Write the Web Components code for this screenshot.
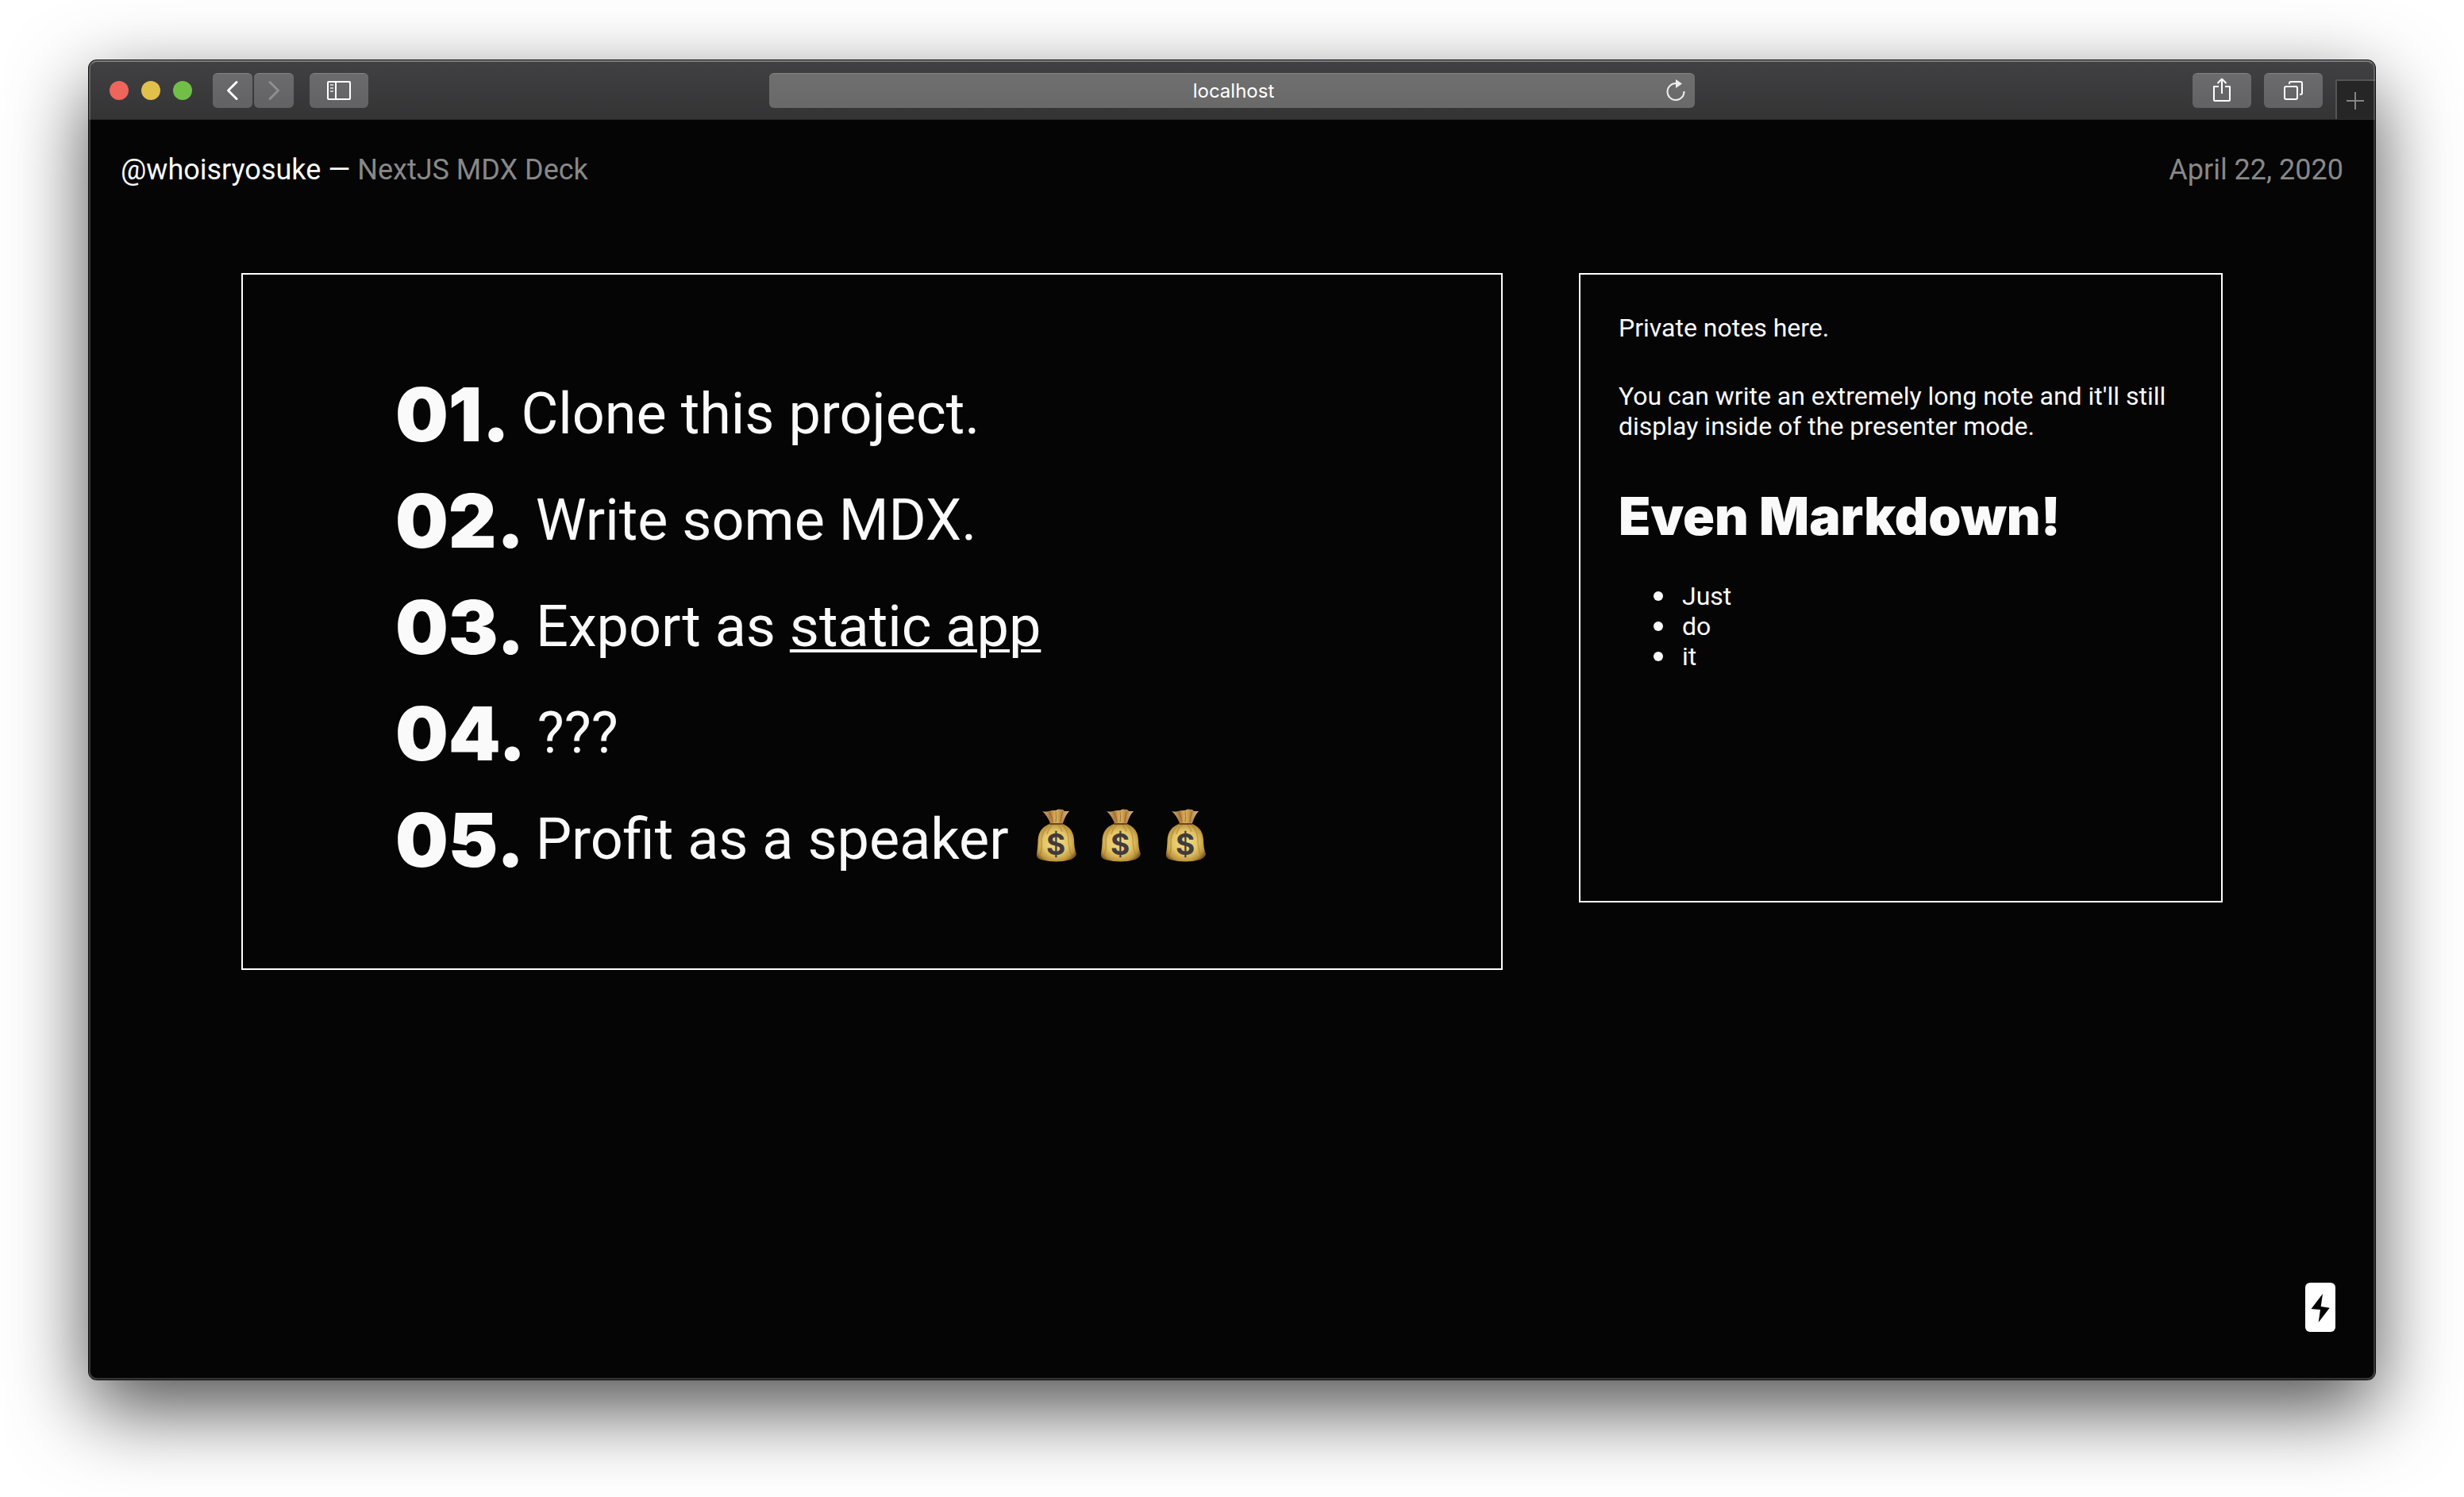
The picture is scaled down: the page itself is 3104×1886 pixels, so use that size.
<!DOCTYPE html>
<html lang="en">
<head>
<meta charset="utf-8">
<title>NextJS MDX Deck</title>
<style>
html, body { height: 100%; }
body { margin: 0; background: #fff; font-family: Roboto, "Liberation Sans", sans-serif; color: #fafafa; }
</style>
</head>
<body>
<deck-window>
  <browser-toolbar slot="toolbar"></browser-toolbar>
  <deck-header slot="page">
    <span slot="author">@whoisryosuke —</span>
    <span slot="title">NextJS MDX Deck</span>
    <time slot="date" datetime="2020-04-22">April 22, 2020</time>
  </deck-header>
  <presenter-view slot="page">
    <deck-slide slot="slide">
      <deck-step role="listitem" number="01.">Clone this project.</deck-step>
      <deck-step role="listitem" number="02.">Write some MDX.</deck-step>
      <deck-step role="listitem" number="03.">Export as <a href="#static" style="color:inherit;text-decoration-thickness:4px;text-underline-offset:4px">static app</a></deck-step>
      <deck-step role="listitem" number="04.">???</deck-step>
      <deck-step role="listitem" number="05.">Profit as a speaker <money-bag></money-bag> <money-bag></money-bag> <money-bag></money-bag></deck-step>
    </deck-slide>
    <speaker-notes slot="notes"></speaker-notes>
  </presenter-view>
  <amp-badge slot="badge"></amp-badge>
</deck-window>

<script>
const define = (name, html) => {
  const template = document.createElement('template');
  template.innerHTML = html;
  customElements.define(name, class extends HTMLElement {
    constructor() {
      super();
      this.attachShadow({ mode: 'open' }).append(template.content.cloneNode(true));
    }
    connectedCallback() {
      const n = this.shadowRoot.querySelector('[data-number]');
      if (n) n.textContent = this.getAttribute('number');
    }
  });
};

define('deck-window', `
<style>
:host { display: flex; box-sizing: border-box; height: 100%; padding: 76px 112px 148px; }
.window { position: relative; flex: 1; display: flex; flex-direction: column; overflow: hidden; background: #050505; border-radius: 10px; }
.shadow { flex: 1; display: flex; border-radius: 10px; box-shadow: 0 0 0 1px #0a0c0a, 0 36px 100px rgba(0,0,0,.7); }
.rim { position: absolute; inset: 0; border: 2px solid rgba(255,255,255,.2); border-top-color: rgba(255,255,255,.32); border-radius: 10px; pointer-events: none; }
.badge { position: absolute; right: 50px; bottom: 60px; }
</style>
<div class="shadow"><div class="window">
  <slot name="toolbar"></slot>
  <main><slot name="page"></slot></main>
  <div class="badge"><slot name="badge"></slot></div>
  <div class="rim"></div>
</div></div>`);

define('browser-toolbar', `
<style>
:host { display: grid; grid-template-columns: 1fr 1166px 1fr; box-sizing: border-box; height: 75px; background: linear-gradient(#414143, #343435); border-bottom: 1px solid #29292a; }
div { display: flex; }
.left { padding: 16px 0 0 26px; }
.light { width: 24px; height: 24px; margin: 10px 16px 0 0; border-radius: 50%; }
.light:nth-child(3) { margin-right: 26px; }
button { box-sizing: border-box; height: 44px; width: 74px; margin: 0; padding: 0; border: 0; border-top: 1px solid #838385; border-radius: 6px; background: linear-gradient(#6b6b6d, #626264); color: #fff; display: block; }
button svg { display: block; margin: -1px auto 0; }
.nav { width: 50px; margin-right: 2px; }
.nav.next { margin-right: 20px; color: #8f8f91; }
.address { position: relative; margin-top: 16px; height: 44px; }
input { box-sizing: border-box; width: 100%; height: 44px; margin: 0; padding: 0 0 0 4px; border: 0; border-top: 1px solid #868687; border-radius: 6px; background: linear-gradient(#6f6f70, #696969); color: #fff; text-align: center; font: 24px/44px Inter, "Liberation Sans", sans-serif; }
.reload { position: absolute; right: 6px; top: 0; width: 36px; border: 0; background: none; color: #eee; }
.right { justify-content: flex-end; gap: 16px; }
.right button { margin-top: 16px; }
.right .tab { width: 50px; height: 50px; margin-top: 24px; border: 2px solid #555557; border-right: 0; border-bottom: 0; border-radius: 0; background: #262626; color: #858585; }
</style>
<div class="left">
  <span class="light" style="background:#ee655b"></span><span class="light" style="background:#e1c04c"></span><span class="light" style="background:#71bf47"></span>
  <button class="nav" aria-label="Back"><svg width="50" height="44" fill="none" stroke="currentColor" stroke-width="3" stroke-linecap="round" stroke-linejoin="round"><path d="M30 11.500 19.500 22 30 32.500"/></svg></button>
  <button class="nav next" aria-label="Forward"><svg width="50" height="44" fill="none" stroke="currentColor" stroke-width="3" stroke-linecap="round" stroke-linejoin="round"><path d="M20 11.500 30.500 22 20 32.500"/></svg></button>
  <button aria-label="Sidebar"><svg width="74" height="44" fill="none" stroke="currentColor" stroke-width="2"><rect x="23" y="11" width="28" height="22" rx="1"/><path d="M33 11V33"/><path d="M26 15h4M26 19h4M26 23h4" stroke="#c4c4c5"/></svg></button>
</div>
<div class="address">
  <input type="text" aria-label="Address" value="localhost">
  <button class="reload" aria-label="Reload"><svg width="36" height="44" fill="none" stroke="currentColor" stroke-width="2"><path d="M18 13A10.500 10.500 0 1 0 28.500 23"/><path d="M18 8 26 13.500 18 19Z" fill="currentColor" stroke="none"/></svg></button>
</div>
<div class="right">
  <button aria-label="Share"><svg width="74" height="44" fill="none" stroke="currentColor" stroke-width="2" stroke-linejoin="round"><path d="M33 17H27V34Q27 35 28 35H46Q47 35 47 34V17H41M37 26V7.500M31.500 13 37 7.500 42.500 13"/></svg></button>
  <button aria-label="Tabs"><svg width="74" height="44" fill="none" stroke="currentColor" stroke-width="2"><rect x="26" y="17" width="16" height="16" rx="2"/><path d="M32 14V13Q32 11 34 11H46Q48 11 48 13V25Q48 27 46 27H45"/></svg></button>
  <button class="tab" aria-label="New tab"><svg width="48" height="48" style="margin:0" fill="none" stroke="currentColor" stroke-width="2"><path d="M12 25H34M23 14V36"/></svg></button>
</div>`);

define('deck-header', `
<style>
:host { display: flex; justify-content: space-between; padding: 40px 40px 0; font-size: 36px; line-height: 46px; }
.muted { color: #888; }
</style>
<span><slot name="author"></slot> <span class="muted"><slot name="title"></slot></span></span>
<span class="muted"><slot name="date"></slot></span>`);

define('presenter-view', `
<style>
:host { display: grid; grid-template-columns: 1589fr 811fr; gap: 96px; align-items: start; padding: 107px 192px 0; }
</style>
<slot name="slide"></slot><slot name="notes"></slot>`);

define('deck-slide', `
<style>
:host { display: block; border: 2px solid #fff; padding: 109px 96px 95px 192px; }
</style>
<div role="list"><slot></slot></div>`);

define('deck-step', `
<style>
:host { display: flex; align-items: center; height: 134px; gap: 14px; font-size: 72px; line-height: 84px; }
[data-number] { font: 900 94px/134px Inter, "Open Sans", sans-serif; }
::slotted(money-bag:first-of-type) { margin-left: 10px; }
</style>
<span data-number></span><span><slot></slot></span>`);

define('money-bag', `
<style>
:host { display: inline-block; width: 64px; height: 72px; vertical-align: -8px; }
svg { display: block; }
</style>
<svg width="64" height="72" viewBox="0 0 64 72" role="img" aria-label="money bag">
  <defs>
    <radialGradient id="b" cx=".48" cy=".5" r=".58"><stop offset="0" stop-color="#f2dd88"/><stop offset=".55" stop-color="#e3c566"/><stop offset=".85" stop-color="#bd953f"/><stop offset="1" stop-color="#7d5a26"/></radialGradient>
    <linearGradient id="n" x1="0" x2="1"><stop offset="0" stop-color="#d0ab7c"/><stop offset=".3" stop-color="#b07b3a"/><stop offset=".5" stop-color="#dfb860"/><stop offset=".7" stop-color="#b98845"/><stop offset="1" stop-color="#d8b98a"/></linearGradient>
  </defs>
  <path d="M14 4Q18 5 22 4L26 3 31 3 34 1.500 40 2 42 4 48 4Q43 9 40 19L24 19Q20 9 14 4Z" fill="url(#n)"/>
  <path d="M22 5Q27 11 27 18M31 4Q32 12 31 18M40 4Q37 11 37 18" stroke="#8e5f28" stroke-width="1.200" fill="none" opacity=".7"/>
  <path d="M23 20H40Q53 25 54 40Q54 50 57 58Q56 62 50 65Q32 70 12 65Q6 63 7 57Q8 52 8.500 43Q8 26 23 20Z" fill="url(#b)"/>
  <path d="M22 22Q14 29 13 40Q14 52 11 60M27 21Q22 25 20 33M39 21Q46 27 47 39Q47 51 51 60M34 21Q37 24 39 30" stroke="#a97d30" stroke-width="1.500" fill="none" opacity=".55"/>
  <path d="M23 20H40" stroke="#6d471d" stroke-width="2"/>
  <text x="31" y="59" text-anchor="middle" font-family="Inter" font-weight="700" font-size="37" fill="#433a3d">$</text>
</svg>`);

define('speaker-notes', `
<style>
:host { display: block; box-sizing: border-box; min-height: 793px; border: 2px solid #fff; padding: 48px; font-size: 32px; line-height: 38px; }
p { margin: 0 0 48px; }
h2 { margin: 48px 0 36px; font: 900 66px/92px Inter, "Open Sans", sans-serif; }
ul { margin: 0; padding-left: 44px; list-style: none; }
li { display: flex; align-items: center; gap: 24px; }
li::before { content: ""; width: 12px; height: 12px; border-radius: 50%; background: currentColor; }
</style>
<p>Private notes here.</p>
<p>You can write an extremely long note and it'll still display inside of the presenter mode.</p>
<h2>Even Markdown!</h2>
<ul><li>Just</li><li>do</li><li>it</li></ul>`);

define('amp-badge', `
<style>
:host { display: block; }
button { display: block; margin: 0; padding: 0; border: 0; width: 38px; height: 62px; border-radius: 6px; background: #fff; }
svg { display: block; }
</style>
<button aria-label="Prerendered page"><svg width="38" height="62"><path d="M22 14 7.500 33 19 34 16.700 50 30.700 31.700 19.700 30Z" fill="#000"/></svg></button>`);
</script>
</body>
</html>
